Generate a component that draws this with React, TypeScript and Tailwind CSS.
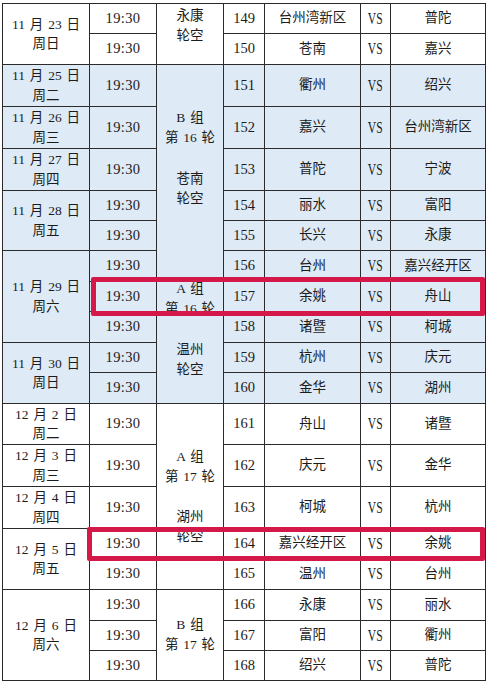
import React from "react"

type Row = {
  date?: [string, string]
  dateSpan?: number
  round?: React.ReactNode
  roundSpan?: number
  no: number
  home: string
  away: string
  h: string
  blue?: boolean
}

const line = "leading-[20px]"

function Pair({ a, b, className = "" }: { a: string; b: string; className?: string }) {
  return (
    <div className={`flex flex-col items-center ${line} ${className}`}>
      <span>{a}</span>
      <span>{b}</span>
    </div>
  )
}

const rows: Row[] = [
  { date: ["11 月 23 日", "周日"], dateSpan: 2, round: <Pair a="永康" b="轮空" className="pt-[2px]" />, roundSpan: 2, no: 149, home: "台州湾新区", away: "普陀", h: "h-[30px]" },
  { no: 150, home: "苍南", away: "嘉兴", h: "h-[31px]" },
  {
    date: ["11 月 25 日", "周二"],
    round: (
      <div className="pt-[43px]">
        <Pair a="B 组" b="第 16 轮" />
        <Pair a="苍南" b="轮空" className="mt-[21px]" />
        <Pair a="A 组" b="第 16 轮" className="mt-[70px]" />
        <Pair a="温州" b="轮空" className="mt-[21px]" />
      </div>
    ),
    roundSpan: 10,
    no: 151, home: "衢州", away: "绍兴", h: "h-[42px]", blue: true,
  },
  { date: ["11 月 26 日", "周三"], no: 152, home: "嘉兴", away: "台州湾新区", h: "h-[42px]", blue: true },
  { date: ["11 月 27 日", "周四"], no: 153, home: "普陀", away: "宁波", h: "h-[42px]", blue: true },
  { date: ["11 月 28 日", "周五"], dateSpan: 2, no: 154, home: "丽水", away: "富阳", h: "h-[30px]", blue: true },
  { no: 155, home: "长兴", away: "永康", h: "h-[30px]", blue: true },
  { date: ["11 月 29 日", "周六"], dateSpan: 3, no: 156, home: "台州", away: "嘉兴经开区", h: "h-[31px]", blue: true },
  { no: 157, home: "余姚", away: "舟山", h: "h-[30px]", blue: true },
  { no: 158, home: "诸暨", away: "柯城", h: "h-[31px]", blue: true },
  { date: ["11 月 30 日", "周日"], dateSpan: 2, no: 159, home: "杭州", away: "庆元", h: "h-[30px]", blue: true },
  { no: 160, home: "金华", away: "湖州", h: "h-[31px]", blue: true },
  {
    date: ["12 月 2 日", "周二"],
    round: (
      <div className="pt-[43px]">
        <Pair a="A 组" b="第 17 轮" />
        <Pair a="湖州" b="轮空" className="mt-[20px]" />
      </div>
    ),
    roundSpan: 5,
    no: 161, home: "舟山", away: "诸暨", h: "h-[41px]",
  },
  { date: ["12 月 3 日", "周三"], no: 162, home: "庆元", away: "金华", h: "h-[42px]" },
  { date: ["12 月 4 日", "周四"], no: 163, home: "柯城", away: "杭州", h: "h-[42px]" },
  { date: ["12 月 5 日", "周五"], dateSpan: 2, no: 164, home: "嘉兴经开区", away: "余姚", h: "h-[30px]" },
  { no: 165, home: "温州", away: "台州", h: "h-[31px]" },
  { date: ["12 月 6 日", "周六"], dateSpan: 3, round: <Pair a="B 组" b="第 17 轮" />, roundSpan: 3, no: 166, home: "永康", away: "丽水", h: "h-[31px]" },
  { no: 167, home: "富阳", away: "衢州", h: "h-[30px]" },
  { no: 168, home: "绍兴", away: "普陀", h: "h-[30px]" },
]

const cell = "border border-[#2b2b2b] p-0 text-center align-middle"

export default function App() {
  return (
    <div className="relative w-[486px] h-[684px] bg-white pl-[2px] pt-[3px] text-[13.5px] text-[#1c1c1c] [word-spacing:1.5px] font-['Liberation_Serif','Noto_Sans_CJK_SC',serif]">
      <table className="table-fixed border-collapse w-[483px]">
        <colgroup>
          <col className="w-[87px]" />
          <col className="w-[67px]" />
          <col className="w-[67px]" />
          <col className="w-[41px]" />
          <col className="w-[96px]" />
          <col className="w-[30px]" />
          <col className="w-[95px]" />
        </colgroup>
        <tbody>
          {rows.map((r) => (
            <tr key={r.no} className={`${r.h} ${r.blue ? "bg-[#deeaf6]" : "bg-white"}`}>
              {r.date && (
                <td rowSpan={r.dateSpan ?? 1} className={`${cell} leading-[19.5px]`}>
                  <div>{r.date[0]}</div>
                  <div>{r.date[1]}</div>
                </td>
              )}
              <td className={`${cell} text-[14.5px] tracking-[0.4px]`}>19:30</td>
              {r.round && (
                <td
                  rowSpan={r.roundSpan}
                  className={`border border-[#2b2b2b] p-0 text-center ${r.roundSpan === 3 ? "align-middle" : "align-top"}`}
                >
                  {r.round}
                </td>
              )}
              <td className={`${cell} text-[14.5px]`}>{r.no}</td>
              <td className={cell}>{r.home}</td>
              <td className={cell}>
                <span className="inline-block text-[16px] scale-x-[0.72]">VS</span>
              </td>
              <td className={cell}>{r.away}</td>
            </tr>
          ))}
        </tbody>
      </table>

      {/* highlight boxes drawn over the table */}
      <div className="absolute left-[91px] top-[277px] w-[394px] h-[39px] border-[5px] border-[#d5184a] rounded-[2px]" />
      <div className="absolute left-[87px] top-[527px] w-[398px] h-[34px] border-[5px] border-[#d5184a] rounded-[2px]" />
    </div>
  )
}
